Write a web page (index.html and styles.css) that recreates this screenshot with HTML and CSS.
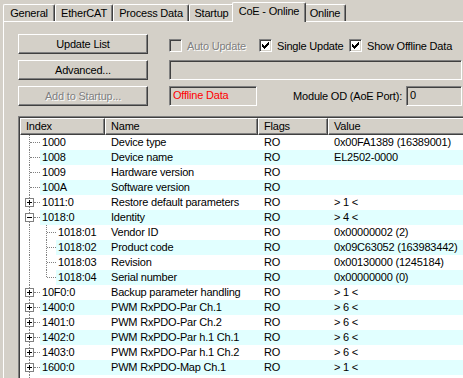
FILE: index.html
```html
<!DOCTYPE html>
<html lang="en">
<head>
    <meta charset="UTF-8">
    <meta name="viewport" content="width=device-width, initial-scale=1.0">
    <link rel="stylesheet" href="styles.css">
    <title>CoE - Online</title>
</head>
<body>
    <div class="tabs">
        <div class="tab tab-general">General</div>
        <div class="tab tab-ethercat">EtherCAT</div>
        <div class="tab tab-process">Process Data</div>
        <div class="tab tab-startup">Startup</div>
        <div class="tab tab-coe active">CoE - Online</div>
        <div class="tab tab-online">Online</div>
    </div>

    <div class="panel">
        <div class="controls">
            <button class="btn">Update List</button>
            <div class="checks">
                <label class="check check-auto disabled"><span class="box"></span>Auto Update</label>
                <label class="check check-single"><span class="box"><svg width="9" height="9" viewBox="0 0 9 9"><path d="M1 3h1v3H1zM2 4h1v3H2zM3 5h1v3H3zM4 4h1v3H4zM5 3h1v3H5zM6 2h1v3H6zM7 1h1v3H7z" fill="#000"/></svg></span>Single Update</label>
                <label class="check"><span class="box"><svg width="9" height="9" viewBox="0 0 9 9"><path d="M1 3h1v3H1zM2 4h1v3H2zM3 5h1v3H3zM4 4h1v3H4zM5 3h1v3H5zM6 2h1v3H6zM7 1h1v3H7z" fill="#000"/></svg></span>Show Offline Data</label>
            </div>

            <button class="btn">Advanced...</button>
            <div class="field field-wide"></div>

            <button class="btn" disabled>Add to Startup...</button>
            <div class="port-row">
                <div class="field field-status">Offline Data</div>
                <span class="port-label">Module OD (AoE Port):</span>
                <div class="field field-port">0</div>
            </div>
        </div>

        <div class="list">
            <div class="table">
                <div class="head">
                    <div class="hc">Index</div>
                    <div class="hc">Name</div>
                    <div class="hc">Flags</div>
                    <div class="hc">Value</div>
                </div>

                <div class="row">
                    <div class="idx"><span class="tree"><i class="hline leaf"></i></span><span class="key">1000</span></div>
                    <div class="cell">Device type</div><div class="cell">RO</div><div class="cell">0x00FA1389 (16389001)</div>
                </div>
                <div class="row alt">
                    <div class="idx"><span class="tree"><i class="hline leaf"></i></span><span class="key">1008</span></div>
                    <div class="cell">Device name</div><div class="cell">RO</div><div class="cell">EL2502-0000</div>
                </div>
                <div class="row">
                    <div class="idx"><span class="tree"><i class="hline leaf"></i></span><span class="key">1009</span></div>
                    <div class="cell">Hardware version</div><div class="cell">RO</div><div class="cell"></div>
                </div>
                <div class="row alt">
                    <div class="idx"><span class="tree"><i class="hline leaf"></i></span><span class="key">100A</span></div>
                    <div class="cell">Software version</div><div class="cell">RO</div><div class="cell"></div>
                </div>
                <div class="row">
                    <div class="idx"><span class="tree"><i class="exp plus"></i><i class="hline"></i></span><span class="key">1011:0</span></div>
                    <div class="cell">Restore default parameters</div><div class="cell">RO</div><div class="cell">&gt; 1 &lt;</div>
                </div>
                <div class="row alt">
                    <div class="idx"><span class="tree"><i class="exp"></i><i class="hline"></i></span><span class="key">1018:0</span></div>
                    <div class="cell">Identity</div><div class="cell">RO</div><div class="cell">&gt; 4 &lt;</div>
                </div>
                <div class="row">
                    <div class="idx"><span class="tree child"><i class="hline sub"></i></span><span class="key">1018:01</span></div>
                    <div class="cell">Vendor ID</div><div class="cell">RO</div><div class="cell">0x00000002 (2)</div>
                </div>
                <div class="row alt">
                    <div class="idx"><span class="tree child"><i class="hline sub"></i></span><span class="key">1018:02</span></div>
                    <div class="cell">Product code</div><div class="cell">RO</div><div class="cell">0x09C63052 (163983442)</div>
                </div>
                <div class="row">
                    <div class="idx"><span class="tree child"><i class="hline sub"></i></span><span class="key">1018:03</span></div>
                    <div class="cell">Revision</div><div class="cell">RO</div><div class="cell">0x00130000 (1245184)</div>
                </div>
                <div class="row alt">
                    <div class="idx"><span class="tree child last"><i class="hline sub"></i></span><span class="key">1018:04</span></div>
                    <div class="cell">Serial number</div><div class="cell">RO</div><div class="cell">0x00000000 (0)</div>
                </div>
                <div class="row">
                    <div class="idx"><span class="tree"><i class="exp plus"></i><i class="hline"></i></span><span class="key">10F0:0</span></div>
                    <div class="cell">Backup parameter handling</div><div class="cell">RO</div><div class="cell">&gt; 1 &lt;</div>
                </div>
                <div class="row alt">
                    <div class="idx"><span class="tree"><i class="exp plus"></i><i class="hline"></i></span><span class="key">1400:0</span></div>
                    <div class="cell">PWM RxPDO-Par Ch.1</div><div class="cell">RO</div><div class="cell">&gt; 6 &lt;</div>
                </div>
                <div class="row">
                    <div class="idx"><span class="tree"><i class="exp plus"></i><i class="hline"></i></span><span class="key">1401:0</span></div>
                    <div class="cell">PWM RxPDO-Par Ch.2</div><div class="cell">RO</div><div class="cell">&gt; 6 &lt;</div>
                </div>
                <div class="row alt">
                    <div class="idx"><span class="tree"><i class="exp plus"></i><i class="hline"></i></span><span class="key">1402:0</span></div>
                    <div class="cell">PWM RxPDO-Par h.1 Ch.1</div><div class="cell">RO</div><div class="cell">&gt; 6 &lt;</div>
                </div>
                <div class="row">
                    <div class="idx"><span class="tree"><i class="exp plus"></i><i class="hline"></i></span><span class="key">1403:0</span></div>
                    <div class="cell">PWM RxPDO-Par h.1 Ch.2</div><div class="cell">RO</div><div class="cell">&gt; 6 &lt;</div>
                </div>
                <div class="row alt">
                    <div class="idx"><span class="tree"><i class="exp plus"></i><i class="hline"></i></span><span class="key">1600:0</span></div>
                    <div class="cell">PWM RxPDO-Map Ch.1</div><div class="cell">RO</div><div class="cell">&gt; 1 &lt;</div>
                </div>
                <div class="tree tail"></div>
            </div>
        </div>
    </div>
</body>
</html>
```

FILE: styles.css
```css
html, body {
    height: 100%;
}

body {
    margin: 0;
    overflow: hidden;
    background: #d4d0c8;
    color: #000;
    font-family: "Liberation Sans", Arial, sans-serif;
    font-size: 11px;
    letter-spacing: -0.2px;
}

/* tab strip */
.tabs {
    display: flex;
    align-items: flex-end;
    height: 21px;
    padding-left: 3px;
}

.tab {
    box-sizing: border-box;
    height: 17px;
    line-height: 16px;
    text-align: center;
    white-space: nowrap;
    border-top: 1px solid #fff;
    border-left: 1px solid #fff;
    border-right: 1px solid #404040;
    border-radius: 2px 2px 0 0;
    box-shadow: inset -1px 0 #808080;
}

.tab-general { width: 52px; }
.tab-ethercat { width: 58px; }
.tab-process { width: 76px; }
.tab-startup { width: 45px; }
.tab-coe { width: 74px; }
.tab-online { width: 42px; }

.tab.active {
    position: relative;
    z-index: 1;
    height: 20px;
    margin: 0 -2px -1px;
    padding-bottom: 2px;
    background: #d4d0c8;
}

/* page of the tab control, runs on past the window edge */
.panel {
    box-sizing: border-box;
    width: 460px;
    height: 357px;
    margin-left: 3px;
    padding: 12px 0 0 14px;
    border-top: 1px solid #fff;
    border-left: 1px solid #fff;
}

.controls {
    display: grid;
    grid-template-columns: 130px 293px;
    grid-auto-rows: 20px;
    column-gap: 21px;
    row-gap: 6px;
}

.btn {
    box-sizing: border-box;
    height: 20px;
    padding: 0;
    font: inherit;
    letter-spacing: inherit;
    color: #000;
    background: #d4d0c8;
    border: 1px solid;
    border-color: #fff #404040 #404040 #fff;
    box-shadow: inset -1px -1px #808080;
}

.btn:disabled {
    color: #808080;
    text-shadow: 1px 1px #fff;
}

.checks {
    display: flex;
    align-items: center;
    padding-top: 3px;
}

.check {
    display: flex;
    align-items: center;
    white-space: nowrap;
}

.check-auto,
.check-single {
    width: 90px;
}

.check.disabled {
    color: #808080;
    text-shadow: 1px 1px #fff;
}

.box {
    box-sizing: border-box;
    display: flex;
    width: 13px;
    height: 13px;
    padding: 1px;
    margin-right: 5px;
    background: #fff;
    border: 1px solid;
    border-color: #808080 #fff #fff #808080;
    box-shadow: inset 1px 1px #404040, inset -1px -1px #d4d0c8;
}

.check.disabled .box {
    background: #d4d0c8;
}

.field {
    box-sizing: border-box;
    height: 20px;
    line-height: 16px;
    padding-left: 3px;
    background: #d4d0c8;
    border: 1px solid;
    border-color: #808080 #fff #fff #808080;
    box-shadow: inset 1px 1px #404040, inset -1px -1px #d4d0c8;
    white-space: nowrap;
}

.port-row {
    display: flex;
    align-items: center;
}

.field-status {
    width: 88px;
    color: #f00;
}

.port-label {
    margin-left: auto;
    margin-right: 4px;
}

.field-port {
    width: 56px;
}

/* object dictionary list */
.list {
    box-sizing: border-box;
    width: 445px;
    height: 262px;
    margin-top: 10px;
    border-top: 1px solid #808080;
    border-left: 1px solid #808080;
}

.table {
    box-sizing: border-box;
    height: 100%;
    overflow: hidden;
    background: #fff;
    border-top: 1px solid #404040;
    border-left: 1px solid #404040;
}

.head,
.row {
    display: grid;
    grid-template-columns: 85px 153px 70px 1fr;
}

.hc {
    box-sizing: border-box;
    height: 17px;
    line-height: 15px;
    padding-left: 5px;
    background: #d4d0c8;
    border: 1px solid;
    border-color: #fff #404040 #404040 #fff;
    box-shadow: inset -1px -1px #808080;
}

.hc:last-child {
    border-right: 0;
    box-shadow: inset 0 -1px #808080;
}

.row {
    height: 15px;
    line-height: 15px;
}

.cell {
    padding-left: 6px;
    white-space: nowrap;
    overflow: hidden;
}

.idx {
    display: flex;
}

.key {
    flex: 1;
    padding-left: 2px;
}

.row.alt .key,
.row.alt .cell {
    background: #e1ffff;
}

/* tree lines */
.tree {
    display: flex;
    align-items: center;
    width: 20px;
    background: linear-gradient(#808080 50%, transparent 50%) 9px 0 / 1px 2px repeat-y;
}

.tree.tail {
    height: 15px;
}

.tree.child {
    width: 36px;
    background:
        linear-gradient(#808080 50%, transparent 50%) 9px 0 / 1px 2px repeat-y,
        linear-gradient(#808080 50%, transparent 50%) 26px 0 / 1px 2px repeat-y;
}

.tree.child.last {
    background:
        linear-gradient(#fff, #fff) 26px 8px / 1px 7px no-repeat,
        linear-gradient(#808080 50%, transparent 50%) 9px 0 / 1px 2px repeat-y,
        linear-gradient(#808080 50%, transparent 50%) 26px 0 / 1px 2px repeat-y;
}

.hline {
    width: 6px;
    border-top: 1px dotted #808080;
}

.hline.leaf {
    width: 10px;
    margin-left: 10px;
}

.hline.sub {
    width: 9px;
    margin-left: 27px;
}

.exp {
    box-sizing: border-box;
    width: 9px;
    height: 9px;
    margin-left: 5px;
    border: 1px solid #808080;
    background: linear-gradient(#000, #000) center / 5px 1px no-repeat, #fff;
}

.exp.plus {
    background:
        linear-gradient(#000, #000) center / 5px 1px no-repeat,
        linear-gradient(#000, #000) center / 1px 5px no-repeat,
        #fff;
}
```
